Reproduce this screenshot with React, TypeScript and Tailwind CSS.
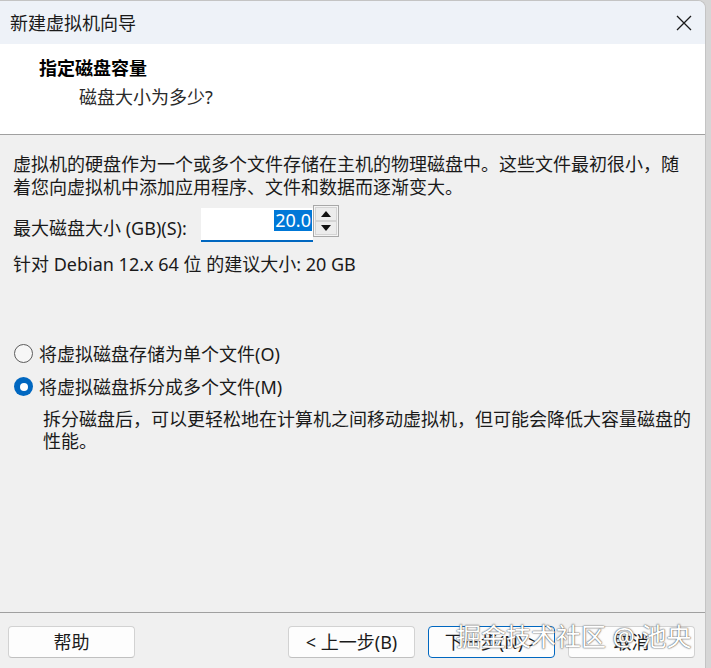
import React from "react";

const font = "font-['Noto_Sans','Noto_Sans_CJK_SC',sans-serif]";

function Radio({ checked }: { checked?: boolean }) {
  if (checked) {
    return (
      <span className="flex size-[19px] shrink-0 items-center justify-center rounded-full bg-[#0067c0]">
        <span className="size-[8px] rounded-full bg-white" />
      </span>
    );
  }
  return <span className="size-[19px] shrink-0 rounded-full border border-[#5c5c5c] bg-[#f7f7f7]" />;
}

function Btn({ label, focus }: { label: string; focus?: boolean }) {
  return (
    <button
      className={
        "h-[32px] w-[127px] rounded-[4px] border bg-[#fdfdfd] text-[18px] leading-none text-[#1b1b1b] " +
        (focus ? "border-[#0067c0]" : "border-[#d2d2d2] border-b-[#c0c0c0]")
      }
    >
      {label}
    </button>
  );
}

export default function App() {
  return (
    <div className={`h-[668px] w-[711px] overflow-hidden bg-[#d6d6d6] ${font}`}>
      <div className="relative flex h-[668px] w-[706px] flex-col overflow-hidden rounded-tr-[8px] border-r border-t border-[#c4c4c4] bg-[#f0f0f0] text-[#1a1a1a]">
        {/* title bar */}
        <div className="flex h-[43px] shrink-0 items-center justify-between bg-[#eef2f8] pl-[10px] pr-[13px]">
          <span className="text-[18px] leading-none">新建虚拟机向导</span>
          <svg width="16" height="16" viewBox="0 0 16 16">
            <path d="M1 1L15 15M15 1L1 15" stroke="#1a1a1a" strokeWidth="1.3" fill="none" />
          </svg>
        </div>

        {/* header */}
        <div className="h-[91px] shrink-0 border-b border-[#a0a0a0] bg-white pt-[12px]">
          <div className="pl-[39px] text-[18px] font-bold leading-[24px] text-black">指定磁盘容量</div>
          <div className="mt-[5px] pl-[79px] text-[18px] leading-[24px] text-[#2a2a2a]">磁盘大小为多少?</div>
        </div>

        {/* body */}
        <div className="flex-1 pl-[13px] pt-[18px]">
          <div className="text-[18px] leading-[23px]">
            <div className="whitespace-nowrap">虚拟机的硬盘作为一个或多个文件存储在主机的物理磁盘中。这些文件最初很小，随</div>
            <div className="whitespace-nowrap">着您向虚拟机中添加应用程序、文件和数据而逐渐变大。</div>
          </div>

          <div className="mt-[6px] flex items-start">
            <span className="mt-[12px] w-[188px] text-[18px] leading-[23px]">最大磁盘大小 (GB)(S):</span>
            <div className="mt-[3px] flex h-[34px] w-[112px] items-start justify-end border-b-2 border-[#0067c0] bg-white pr-[1px] pt-[2px]">
              <span className="bg-[#0078d7] px-[1px] text-[18px] leading-[21px] text-white">20.0</span>
            </div>
            <div className="flex h-[32px] w-[26px] flex-col border border-[#a8a8a8] bg-[#f4f4f4] p-[1px]">
              <div className="flex flex-1 items-center justify-center border border-[#d4d4d4] bg-[#ececec]">
                <svg width="10" height="6" viewBox="0 0 10 6">
                  <path d="M0 6L5 0L10 6Z" fill="#111" />
                </svg>
              </div>
              <div className="flex flex-1 items-center justify-center border border-[#d4d4d4] bg-[#ececec]">
                <svg width="10" height="6" viewBox="0 0 10 6">
                  <path d="M0 0L5 6L10 0Z" fill="#111" />
                </svg>
              </div>
            </div>
          </div>

          <div className="mt-[11px] text-[18px] leading-[23px]">针对 Debian 12.x 64 位 的建议大小: 20 GB</div>

          <div className="mt-[61px] flex h-[33px] items-center gap-[6px] pl-[1px]">
            <Radio />
            <span className="text-[18px] leading-none">将虚拟磁盘存储为单个文件(O)</span>
          </div>
          <div className="flex h-[33px] items-center gap-[6px] pl-[1px]">
            <Radio checked />
            <span className="text-[18px] leading-none">将虚拟磁盘拆分成多个文件(M)</span>
          </div>
          <div className="mt-[5px] pl-[30px] text-[18px] leading-[22px]">
            <div className="whitespace-nowrap">拆分磁盘后，可以更轻松地在计算机之间移动虚拟机，但可能会降低大容量磁盘的</div>
            <div>性能。</div>
          </div>
        </div>

        {/* footer */}
        <div className="flex h-[56px] shrink-0 items-start border-t border-[#a0a0a0] pl-[8px] pt-[13px]">
          <Btn label="帮助" />
          <div className="ml-[153px] flex gap-[13px]">
            <Btn label="< 上一步(B)" />
            <Btn label="下一步(N) >" focus />
            <Btn label="取消" />
          </div>
        </div>

        {/* watermark */}
        <div className="pointer-events-none absolute left-[456px] top-[619px] whitespace-nowrap text-[25px] leading-[32px] text-white [text-shadow:0_0_1px_#444,0_0_2px_#666]">
          掘金技术社区 @ 池央
        </div>
      </div>
    </div>
  );
}
